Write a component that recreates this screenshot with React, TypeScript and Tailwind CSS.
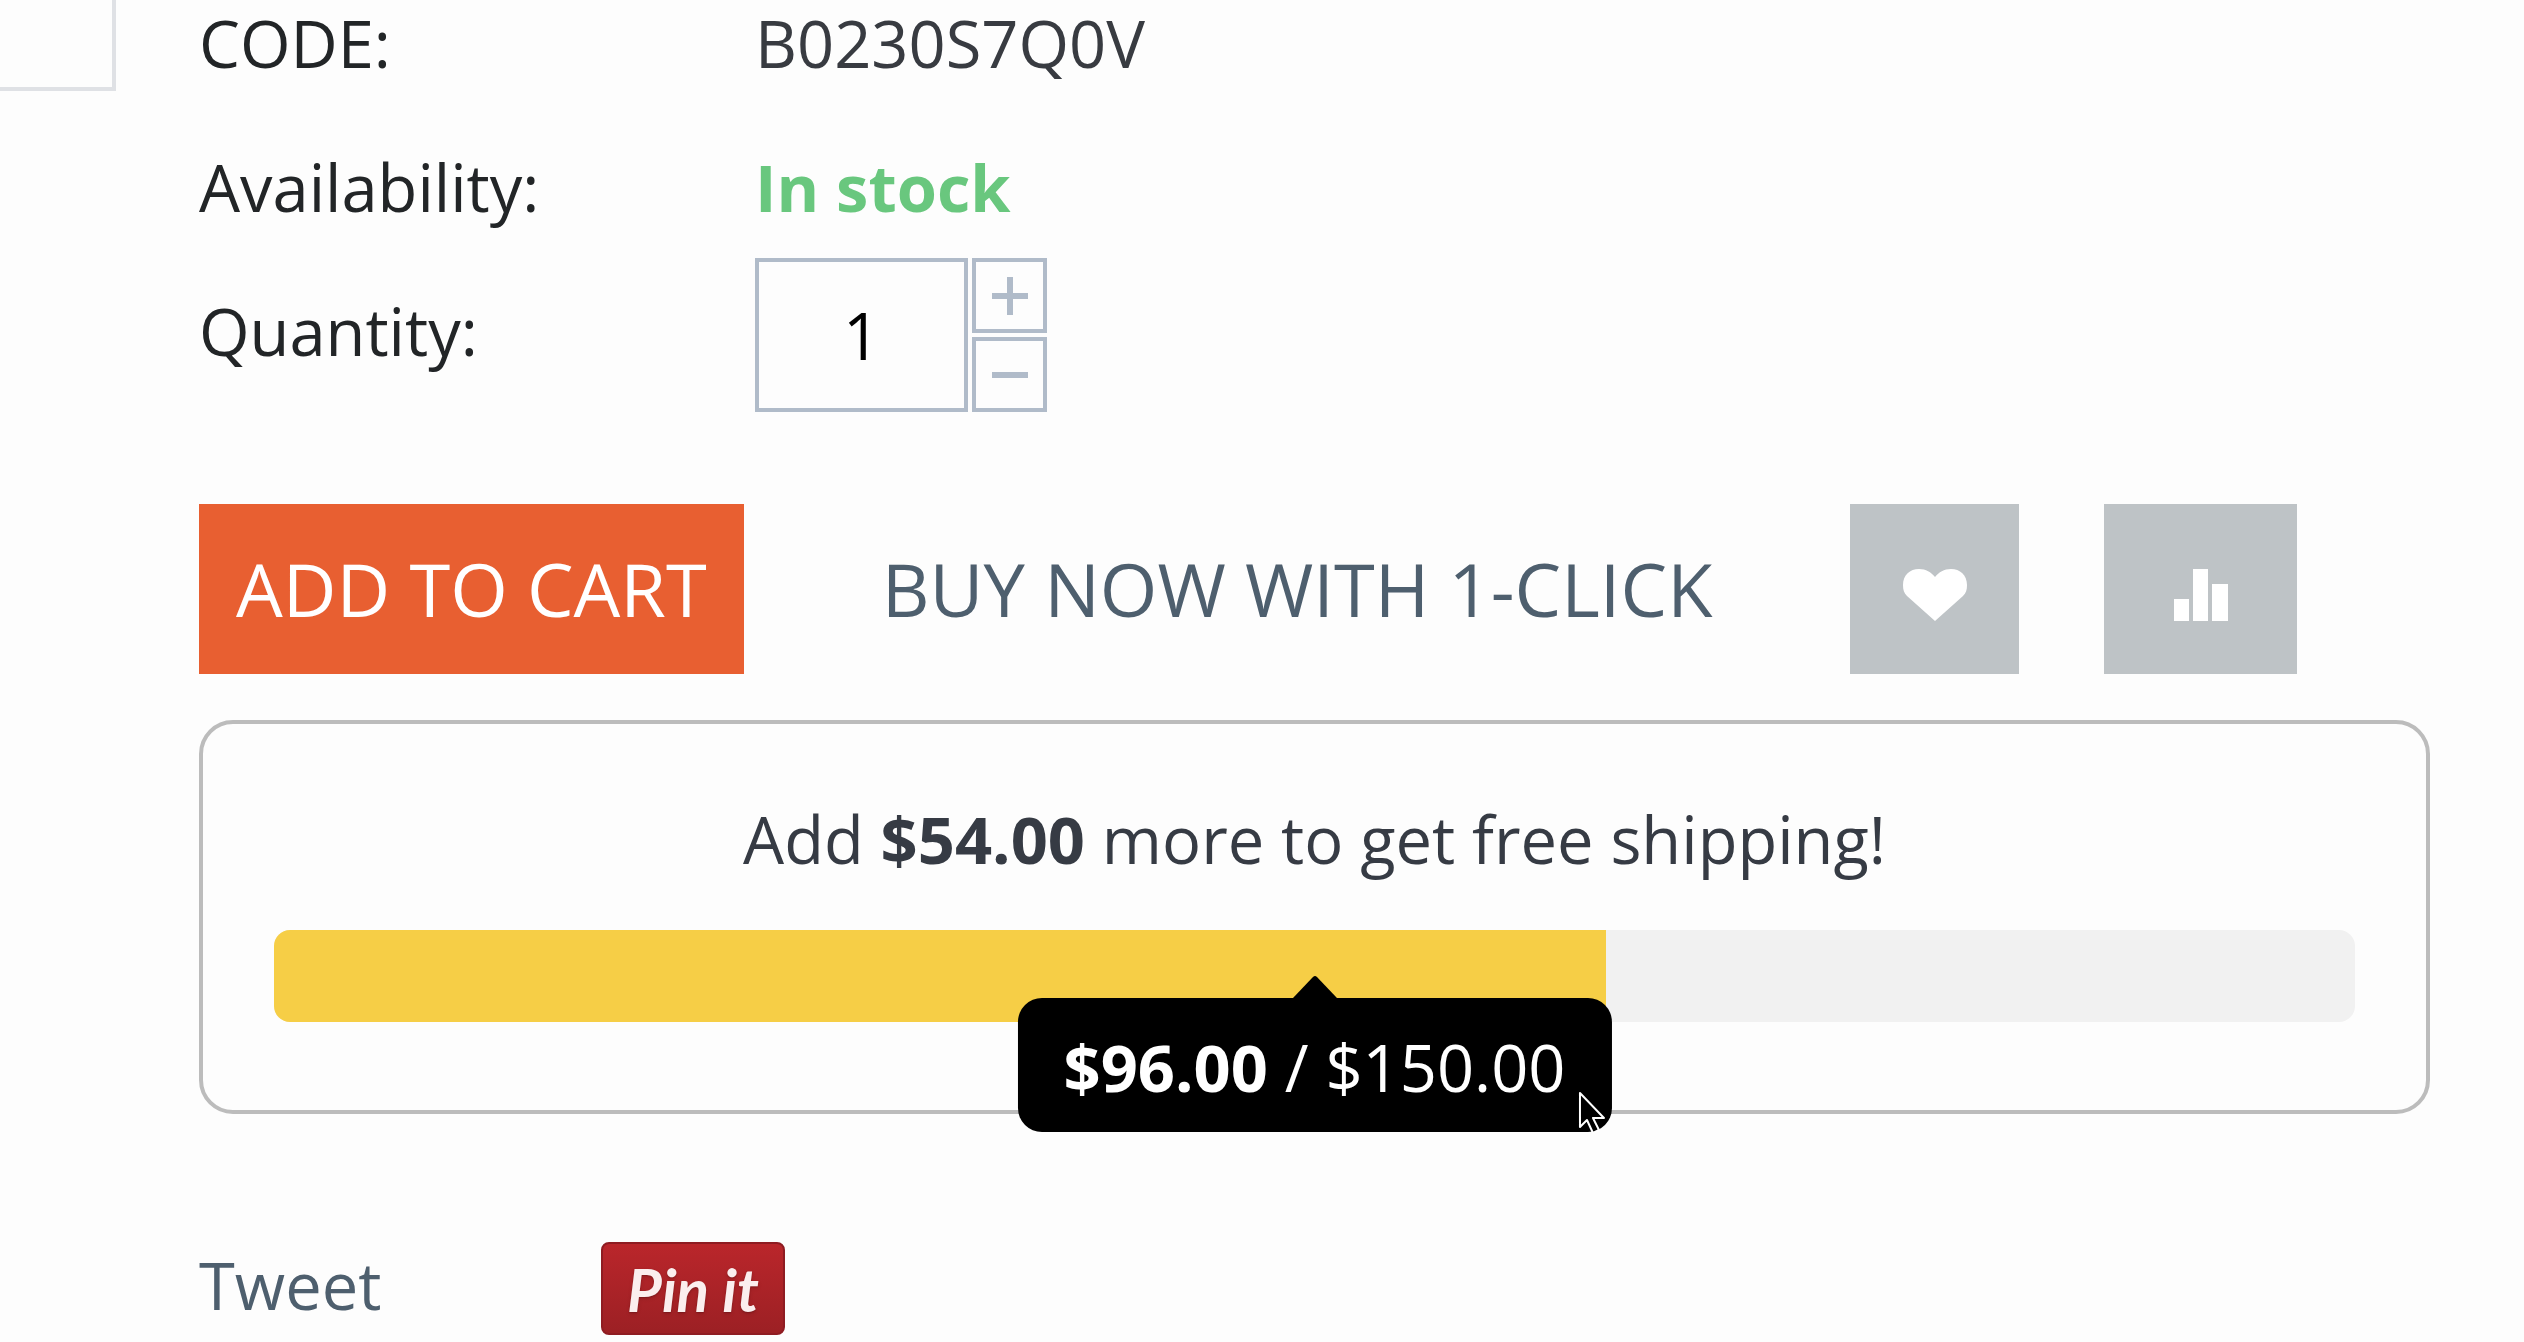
import { useState } from "react";
import clsx from "clsx";

const CART_TOTAL = 96;
const FREE_SHIPPING_FROM = 150;

function formatPrice(value: number) {
  return `$${value.toFixed(2)}`;
}

function HeartIcon() {
  return (
    <svg viewBox="0 0 64 52" className="h-[52px] w-16" fill="currentColor" aria-hidden="true">
      <path d="M32 52 4 27C1 24 0 21 0 16 0 6 7 0 16 0c7 0 12 3 16 8C36 3 41 0 48 0c9 0 16 6 16 16 0 5-1 8-4 11z" />
    </svg>
  );
}

function BarsIcon() {
  return (
    <svg viewBox="0 0 54 52" className="h-[52px] w-[54px]" fill="currentColor" aria-hidden="true">
      <rect x="0" y="30" width="15" height="22" />
      <rect x="19" y="0" width="15" height="52" />
      <rect x="38" y="15" width="16" height="37" />
    </svg>
  );
}

function PointerIcon() {
  return (
    <svg
      viewBox="0 0 28 46"
      className="pointer-events-none absolute top-[93px] left-[560px] h-[46px] w-7"
      aria-hidden="true"
    >
      <path
        d="M2 2v34l7-7 6 13 6-3-6-12h11z"
        fill="#000"
        stroke="#fff"
        strokeWidth="2"
        strokeLinejoin="round"
      />
    </svg>
  );
}

function StepButton({ label, plus, onClick }: { label: string; plus?: boolean; onClick: () => void }) {
  return (
    <button
      type="button"
      aria-label={label}
      onClick={onClick}
      className="flex h-[75px] w-[75px] items-center justify-center border-4 border-[#b0bbc9] text-[#b0bbc9]"
    >
      <svg viewBox="0 0 36 38" className="h-[38px] w-9" stroke="currentColor" strokeWidth="6" aria-hidden="true">
        <path d={plus ? "M0 19h36M18 0v38" : "M0 19h36"} />
      </svg>
    </button>
  );
}

function SquareButton({ label, className, children }: { label: string; className: string; children: React.ReactNode }) {
  return (
    <button
      type="button"
      aria-label={label}
      className={clsx("flex h-[170px] shrink-0 items-center justify-center bg-[#bec3c6] pt-3 text-white", className)}
    >
      {children}
    </button>
  );
}

function QuantityField() {
  const [quantity, setQuantity] = useState(1);

  return (
    <div className="flex items-start">
      <label htmlFor="quantity" className="w-[556px] pt-[30px] text-[#222527]">
        Quantity:
      </label>
      <div className="flex gap-1">
        <input
          id="quantity"
          type="text"
          inputMode="numeric"
          value={quantity}
          onChange={(e) => setQuantity(Number(e.target.value) || 1)}
          className="h-[154px] w-[213px] border-4 border-[#b0bbc9] bg-transparent text-center text-black outline-none"
        />
        <div className="flex flex-col gap-1">
          <StepButton label="Increase" plus onClick={() => setQuantity(quantity + 1)} />
          <StepButton label="Decrease" onClick={() => setQuantity(Math.max(1, quantity - 1))} />
        </div>
      </div>
    </div>
  );
}

function FreeShippingBar() {
  const percent = (CART_TOTAL / FREE_SHIPPING_FROM) * 100;

  return (
    <section className="mt-[46px] rounded-[34px] border-4 border-[#bcbcbc] px-[71px] pt-[72px] pb-[88px] text-[#363b44]">
      <p className="text-center">
        Add <b>{formatPrice(FREE_SHIPPING_FROM - CART_TOTAL)}</b> more to get free shipping!
      </p>
      <div className="relative mt-12">
        <div
          role="progressbar"
          aria-label="Free shipping progress"
          aria-valuenow={CART_TOTAL}
          aria-valuemax={FREE_SHIPPING_FROM}
          className="h-[92px] overflow-hidden rounded-2xl bg-[#f1f1f1]"
        >
          <div className="h-full bg-[#f6ce46]" style={{ width: `${percent}%` }} />
        </div>
        <div
          role="tooltip"
          className="absolute top-[68px] left-1/2 -translate-x-1/2 rounded-3xl bg-black px-[46px] pt-[26px] pb-[22px] whitespace-nowrap text-white"
        >
          <svg
            viewBox="0 0 44 22"
            className="absolute -top-[22px] left-1/2 h-[22px] w-11 -translate-x-1/2"
            aria-hidden="true"
          >
            <path d="M0 22 20 1q2-2 4 0l20 21z" />
          </svg>
          <b>{formatPrice(CART_TOTAL)}</b> / {formatPrice(FREE_SHIPPING_FROM)}
          <PointerIcon />
        </div>
      </div>
    </section>
  );
}

export default function App() {
  return (
    <main className="flex min-h-screen items-start overflow-hidden bg-[#fdfdfd] pr-[94px] font-['Open_Sans',sans-serif] text-[65px] leading-[86px]">
      <div className="h-[91px] w-[116px] shrink-0 border-r-4 border-b-4 border-[#dfe1e5]" />

      <div className="ml-[83px] flex-1">
        <dl>
          <div className="flex pb-[58px]">
            <dt className="w-[556px] text-[#222527]">CODE:</dt>
            <dd className="text-[#383b41]">B0230S7Q0V</dd>
          </div>
          <div className="flex pb-7">
            <dt className="w-[556px] text-[#222527]">Availability:</dt>
            <dd className="font-bold text-[#69c77e]">In stock</dd>
          </div>
        </dl>
        <QuantityField />

        <div className="mt-[92px] flex items-center text-[74px]">
          <button type="button" className="h-[170px] bg-[#e85f31] px-[37px] whitespace-nowrap text-white">
            ADD TO CART
          </button>
          <button type="button" className="ml-[138px] whitespace-nowrap text-[#4e5f6e]">
            BUY NOW WITH 1-CLICK
          </button>
          <SquareButton label="Add to wish list" className="ml-[138px] w-[169px]">
            <HeartIcon />
          </SquareButton>
          <SquareButton label="Compare" className="ml-[85px] w-[193px]">
            <BarsIcon />
          </SquareButton>
        </div>

        <FreeShippingBar />

        <div className="mt-32 flex items-start">
          <a href="#tweet" className="w-[402px] text-[#4e5f6e]">
            Tweet
          </a>
          <a
            href="#pin"
            className="flex h-[93px] w-[184px] items-center justify-center rounded-lg border-2 border-[#8f1c22] bg-linear-to-b from-[#ba262b] to-[#9c2024] font-['Lato',sans-serif] text-[60px] font-bold text-[#fbeeee] italic text-shadow-md"
          >
            Pin it
          </a>
        </div>
      </div>
    </main>
  );
}
